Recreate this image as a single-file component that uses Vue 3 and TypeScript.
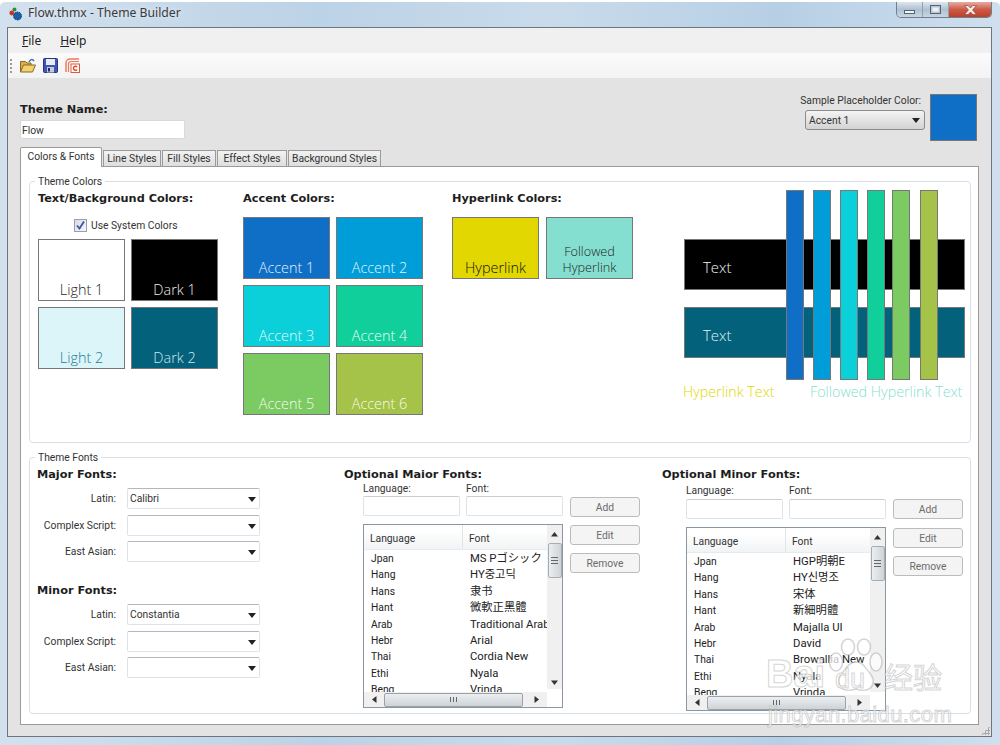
<script setup lang="ts">
interface Swatch { label: string; bg: string; fg: string }
const bases: Swatch[] = [
  { label: 'Light 1', bg: '#ffffff', fg: '#222222' },
  { label: 'Dark 1', bg: '#000000', fg: '#eeeeee' },
  { label: 'Light 2', bg: '#dbf5f9', fg: '#1f7a94' },
  { label: 'Dark 2', bg: '#04617b', fg: '#cfe8ee' },
]
const accents: Swatch[] = [
  { label: 'Accent 1', bg: '#0f6fc6', fg: '#e4f1fb' },
  { label: 'Accent 2', bg: '#009dd9', fg: '#e2f5fc' },
  { label: 'Accent 3', bg: '#0bd0d9', fg: '#e6fbfc' },
  { label: 'Accent 4', bg: '#10cf9b', fg: '#ecfcf7' },
  { label: 'Accent 5', bg: '#7cca62', fg: '#f2fbee' },
  { label: 'Accent 6', bg: '#a5c249', fg: '#f8fbe8' },
]
const bars = [
  { left: 102, bg: '#0f6fc6' },
  { left: 129, bg: '#009dd9' },
  { left: 156, bg: '#0bd0d9' },
  { left: 183, bg: '#10cf9b' },
  { left: 208, bg: '#7cca62' },
  { left: 236, bg: '#a5c249' },
]
const tabs = [
  { label: 'Line Styles', width: 58 },
  { label: 'Fill Styles', width: 54 },
  { label: 'Effect Styles', width: 70 },
  { label: 'Background Styles', width: 93 },
]
const codes = ['Jpan', 'Hang', 'Hans', 'Hant', 'Arab', 'Hebr', 'Thai', 'Ethi', 'Beng']
const majorList = ['MS Pゴシック', 'HY중고딕', '隶书', '微軟正黑體', 'Traditional Arabic', 'Arial', 'Cordia New', 'Nyala', 'Vrinda']
const minorList = ['HGP明朝E', 'HY신명조', '宋体', '新細明體', 'Majalla UI', 'David', 'Browallia New', 'Nyala', 'Vrinda']
const optional = [
  { title: 'Optional Maior Fonts:', list: majorList, cls: 'opt-major' },
  { title: 'Optional Minor Fonts:', list: minorList, cls: 'opt-minor' },
]
const majorRows = [
  { label: 'Latin:', value: 'Calibri' },
  { label: 'Complex Script:', value: '' },
  { label: 'East Asian:', value: '' },
]
const minorRows = [
  { label: 'Latin:', value: 'Constantia' },
  { label: 'Complex Script:', value: '' },
  { label: 'East Asian:', value: '' },
]
</script>

<template>
  <div class="window">
    <header class="titlebar">
      <svg class="app-icon" width="14" height="14" viewBox="0 0 14 14">
        <circle cx="8.500" cy="9" r="4" fill="#1c5fa8" stroke="#173f78" stroke-dasharray="1.500 1" />
        <circle cx="5.500" cy="2.500" r="2" fill="#2f8a3e" />
        <circle cx="2.800" cy="6" r="2.400" fill="#c8342c" />
      </svg>
      <span class="title-text">Flow.thmx - Theme Builder</span>
      <div class="controls">
        <div class="ctl"><span class="min-glyph"></span></div>
        <div class="ctl"><span class="max-glyph"></span></div>
        <div class="ctl close">
          <svg width="15" height="10" viewBox="0 0 15 10"><path d="M1.500 .5h3.600L7.500 3 9.900 .5h3.600L9.500 5l4 4.500H9.900L7.500 7 5.100 9.500H1.500l4-4.500z" fill="#f6ecea" stroke="#8a3a2e" stroke-width=".6" /></svg>
        </div>
      </div>
    </header>

    <div class="client">
      <nav class="menubar">
        <span class="menu"><u>F</u>ile</span>
        <span class="menu"><u>H</u>elp</span>
      </nav>
      <div class="toolbar">
        <span class="gripper"></span>
        <svg class="tool" width="17" height="15" viewBox="0 0 17 15">
          <path d="M1.500 14V3.500h5l1.500 1.500h4v2" fill="#dcae52" stroke="#8a6a20" />
          <path d="M1.500 14l3-7h12l-3 7z" fill="#f4d070" stroke="#8a6a20" />
          <path d="M10 4c1.500-3 3.500-3 5-1" fill="none" stroke="#3a6fb0" stroke-width="1.500" />
        </svg>
        <svg class="tool" width="15" height="15" viewBox="0 0 15 15">
          <rect x=".5" y=".5" width="14" height="14" rx="1" fill="#3f55b8" stroke="#28357a" />
          <rect x="3" y="1" width="9" height="6" fill="#e6ebf6" />
          <rect x="4" y="9" width="7" height="5.500" fill="#c5cad6" />
          <rect x="5" y="10" width="2" height="3.500" fill="#1f2a5e" />
        </svg>
        <svg class="tool" width="15" height="15" viewBox="0 0 15 15">
          <path d="M14 1H5a4 4 0 0 0-4 4v9" fill="none" stroke="#ee7a5e" stroke-width="1.500" />
          <path d="M14 3.500H6A2.500 2.500 0 0 0 3.500 6v8" fill="none" stroke="#ee7a5e" stroke-width="1.200" />
          <rect x="6" y="6" width="8.500" height="8.500" fill="#fff" stroke="#e0583a" />
          <path d="M12 9a2 2 0 1 0 0 2.600" fill="none" stroke="#d8401f" stroke-width="1.400" />
        </svg>
      </div>

      <main class="content">
        <div class="head-row">
          <div class="name-block">
            <label class="heading">Theme Name:</label>
            <div class="name-input">Flow</div>
          </div>
          <div class="sample">
            <div class="sample-controls">
              <span class="small">Sample Placeholder Color:</span>
              <div class="sample-select">Accent 1<i class="arrow"></i></div>
            </div>
            <div class="sample-swatch"></div>
          </div>
        </div>

        <div class="tabs">
          <div class="tab active">Colors &amp; Fonts</div>
          <div v-for="t in tabs" :key="t.label" class="tab" :style="{ width: t.width + 'px' }">{{ t.label }}</div>
        </div>

        <section class="panel">
          <div class="group colors">
            <span class="legend">Theme Colors</span>
            <div class="col col-base">
              <h3 class="heading">Text/Background Colors:</h3>
              <div class="check-row">
                <span class="check">
                  <svg width="11" height="11" viewBox="0 0 11 11"><path d="M2 5.500l2.500 3L9 1.500" fill="none" stroke="#3c55a8" stroke-width="1.800" /></svg>
                </span>
                <span class="small">Use System Colors</span>
              </div>
              <div class="swatches">
                <div v-for="s in bases" :key="s.label" class="swatch" :style="{ background: s.bg, color: s.fg }">{{ s.label }}</div>
              </div>
            </div>
            <div class="col col-accent">
              <h3 class="heading">Accent Colors:</h3>
              <div class="swatches">
                <div v-for="s in accents" :key="s.label" class="swatch" :style="{ background: s.bg, color: s.fg }">{{ s.label }}</div>
              </div>
            </div>
            <div class="col col-link">
              <h3 class="heading">Hyperlink Colors:</h3>
              <div class="swatches">
                <div class="swatch link-a">Hyperlink</div>
                <div class="swatch link-b">Followed<br />Hyperlink</div>
              </div>
            </div>
            <div class="preview">
              <div class="band band-dark">Text</div>
              <div class="band band-blue">Text</div>
              <div class="link-row">
                <span class="plink">Hyperlink Text</span>
                <span class="pfollow">Followed Hyperlink Text</span>
              </div>
              <div v-for="b in bars" :key="b.left" class="bar" :style="{ left: b.left + 'px', background: b.bg }"></div>
            </div>
          </div>

          <div class="group fonts">
            <span class="legend">Theme Fonts</span>
            <div class="font-col">
              <h3 class="heading">Major Fonts:</h3>
              <div class="font-rows">
                <div v-for="r in majorRows" :key="r.label" class="font-row">
                  <span class="small row-label">{{ r.label }}</span>
                  <div class="select">{{ r.value }}<i class="arrow"></i></div>
                </div>
              </div>
              <h3 class="heading minor-head">Minor Fonts:</h3>
              <div class="font-rows">
                <div v-for="r in minorRows" :key="r.label" class="font-row">
                  <span class="small row-label">{{ r.label }}</span>
                  <div class="select">{{ r.value }}<i class="arrow"></i></div>
                </div>
              </div>
            </div>

            <div v-for="o in optional" :key="o.title" class="opt" :class="o.cls">
              <h3 class="heading">{{ o.title }}</h3>
              <div class="opt-grid">
                <span class="small">Language:</span>
                <span class="small">Font:</span>
                <span></span>
                <div class="text-input"></div>
                <div class="text-input"></div>
                <div class="btn add">Add</div>
                <div class="list">
                  <div class="list-main">
                    <div class="list-head">
                      <span class="lh-a">Language</span>
                      <span class="lh-b">Font</span>
                    </div>
                    <div class="list-body">
                      <div v-for="(c, i) in codes" :key="c" class="list-row">
                        <span class="lr-a">{{ c }}</span>
                        <span class="lr-b">{{ o.list[i] }}</span>
                      </div>
                    </div>
                    <div class="hscroll">
                      <svg width="5" height="7" viewBox="0 0 5 7"><path d="M4.500 0v7L0 3.500z" fill="#333" /></svg>
                      <div class="hthumb">
                        <svg width="7" height="5" viewBox="0 0 7 5"><path d="M.5 0v5M3.500 0v5M6.500 0v5" stroke="#666" /></svg>
                      </div>
                      <svg width="5" height="7" viewBox="0 0 5 7"><path d="M.5 0v7L5 3.500z" fill="#333" /></svg>
                    </div>
                  </div>
                  <div class="vscroll">
                    <svg width="7" height="5" viewBox="0 0 7 5"><path d="M0 4.500h7L3.500 0z" fill="#333" /></svg>
                    <div class="vthumb">
                      <svg width="7" height="7" viewBox="0 0 7 7"><path d="M0 .5h7M0 3.500h7M0 6.500h7" stroke="#666" /></svg>
                    </div>
                    <svg class="down" width="7" height="5" viewBox="0 0 7 5"><path d="M0 .5h7L3.500 5z" fill="#333" /></svg>
                    <span class="corner"></span>
                  </div>
                </div>
                <div class="side-btns">
                  <div class="btn">Edit</div>
                  <div class="btn">Remove</div>
                </div>
              </div>
            </div>
          </div>
        </section>
        <span class="grip"></span>
      </main>
    </div>

    <div class="watermark">
      <svg class="paw" width="56" height="60" viewBox="0 0 56 60">
        <g fill="rgba(255,255,255,.72)" stroke="rgba(170,170,170,.5)" stroke-width="1.500">
          <ellipse cx="8" cy="24" rx="6.500" ry="9" />
          <ellipse cx="20" cy="9" rx="6.500" ry="8" />
          <ellipse cx="36" cy="9" rx="6.500" ry="8" />
          <ellipse cx="48" cy="24" rx="6" ry="9" />
          <path d="M28 24c6 0 9 5 13 10 4 5 6 9 3 14-3 5-10 5-16 3-6 2-13 2-16-3-3-5-1-9 3-14 4-5 7-10 13-10z" />
        </g>
      </svg>
      <span class="wm-bai">Bai</span>
      <span class="wm-du">du</span>
      <span class="wm-cn">经验</span>
      <span class="wm-url">jingyan.baidu.com</span>
    </div>
  </div>
</template>

<style scoped>
* { box-sizing: border-box; }
.window {
  position: relative;
  width: 1000px;
  height: 745px;
  display: flex;
  flex-direction: column;
  overflow: hidden;
  font-family: Roboto, "Noto Sans CJK JP", "Noto Sans CJK KR", sans-serif;
  font-size: 10.300px;
  color: #333;
  border-top: 2px solid #fff;
  border-radius: 6px 6px 0 0;
  background: linear-gradient(90deg, #d3e1ee 0%, #bcd2e6 32%, #c9dbeb 55%, #b7cfe5 78%, #cfdfee 100%);
}
.titlebar {
  height: 25px;
  flex: none;
  display: flex;
  align-items: flex-start;
  padding: 0 8px 0 9px;
}
.app-icon { margin-top: 5px; }
.title-text {
  margin: 3px 0 0 5px;
  font-family: "Noto Sans", sans-serif;
  font-size: 12.200px;
  line-height: 16px;
  color: #3b3b3b;
  text-shadow: 0 0 6px #eef4fa;
}
.controls {
  margin-left: auto;
  display: flex;
  height: 16px;
  border: 1px solid #6f7f8e;
  border-top: 0;
  border-radius: 0 0 5px 5px;
  overflow: hidden;
}
.ctl {
  width: 26px;
  display: flex;
  align-items: center;
  justify-content: center;
  background: linear-gradient(#dde6ee, #aec1d2 50%, #c8d6e2);
  border-right: 1px solid #8fa0af;
}
.ctl.close {
  width: 42px;
  border-right: 0;
  background: linear-gradient(#e6aca2, #cc5a46 50%, #bd3f2a);
}
.min-glyph { width: 11px; height: 4px; margin-top: 5px; background: #f2f5f8; border: 1px solid #56646f; }
.max-glyph { width: 11px; height: 9px; background: #eef2f6; border: 1px solid #56646f; box-shadow: inset 0 0 0 1.500px #b9c7d4; }
.client {
  flex: 1;
  margin: 0 8px 8px 7px;
  border: 1px solid #6c7680;
  display: flex;
  flex-direction: column;
  min-height: 0;
}
.menubar {
  height: 25px;
  flex: none;
  background: #f0f0f0;
  display: flex;
  align-items: center;
  gap: 19px;
  padding-left: 14px;
  font-family: "Noto Sans", sans-serif;
  font-size: 12px;
}
.menu { color: #222; }
.toolbar {
  height: 25px;
  flex: none;
  background: linear-gradient(#fbfbfb, #f3f3f3);
  display: flex;
  align-items: center;
  padding-left: 2px;
}
.gripper {
  width: 2px;
  height: 14px;
  margin-right: 7px;
  background: repeating-linear-gradient(#9a9a9a 0 2px, transparent 2px 4px);
}
.tool { margin-right: 7px; }
.content {
  position: relative;
  flex: 1;
  min-height: 0;
  background: #e3e3e3;
  padding: 0 12px 11px 12px;
  display: flex;
  flex-direction: column;
}
.head-row {
  display: flex;
  justify-content: space-between;
  height: 69px;
  flex: none;
}
.heading {
  display: block;
  margin: 0;
  font-family: "DejaVu Sans", sans-serif;
  font-weight: 700;
  font-size: 11.300px;
  line-height: 14px;
  color: #1d1d1d;
}
.name-block { padding-top: 25px; }
.name-input {
  width: 165px;
  height: 19px;
  margin-top: 3px;
  background: #fff;
  border: 1px solid #d6dadd;
  border-radius: 2px;
  padding-left: 1px;
  line-height: 19px;
}
.small { font-size: 10.300px; line-height: 13px; color: #333; }
.sample {
  display: flex;
  gap: 5px;
  padding: 16px 2px 0 0;
}
.sample-controls { display: flex; flex-direction: column; align-items: flex-end; }
.sample-select {
  position: relative;
  width: 120px;
  height: 20px;
  margin-top: 3px;
  margin-right: -4px;
  padding-left: 3px;
  line-height: 20px;
  border: 1px solid #8b8b8b;
  border-radius: 3px;
  background: linear-gradient(#f4f4f4, #d3d3d3);
}
.sample-swatch {
  width: 47px;
  height: 47px;
  margin-left: 4px;
  background: #0f6fc6;
  border: 1px solid #777;
}
.arrow {
  position: absolute;
  right: 4px;
  top: 7px;
  border-left: 4px solid transparent;
  border-right: 4px solid transparent;
  border-top: 5px solid #222;
}
.tabs {
  display: flex;
  align-items: flex-end;
  height: 20px;
  flex: none;
  margin-bottom: -1px;
  position: relative;
  z-index: 1;
}
.tab {
  height: 17px;
  margin-left: 1px;
  padding: 0;
  text-align: center;
  line-height: 16px;
  background: linear-gradient(#f2f2f2, #dedede);
  border: 1px solid #9a9a9a;
  white-space: nowrap;
}
.tab.active {
  height: 20px;
  width: 82px;
  margin-left: 0;
  line-height: 17px;
  background: #fff;
  border-bottom: 0;
  border-radius: 2px 2px 0 0;
}
.panel {
  flex: 1;
  min-height: 0;
  background: #fff;
  border: 1px solid #9a9a9a;
  padding: 14px 7px 10px 8px;
  display: flex;
  flex-direction: column;
  gap: 14px;
}
.group {
  position: relative;
  border: 1px solid #d7e0e8;
  border-radius: 4px;
  display: flex;
}
.legend {
  position: absolute;
  left: 5px;
  top: -7px;
  padding: 0 3px;
  background: #fff;
  line-height: 13px;
}
.colors { height: 262px; padding: 10px 0 0 8px; }
.col-base { width: 205px; }
.col-accent { width: 209px; }
.col-link { width: 232px; }
.check-row {
  display: flex;
  align-items: center;
  gap: 4px;
  margin: 12px 0 0 36px;
  height: 14px;
}
.check {
  width: 13px;
  height: 13px;
  display: flex;
  align-items: center;
  justify-content: center;
  border: 1px solid #9aa0a8;
  background: linear-gradient(135deg, #d5dbe4, #f6f7f9);
}
.swatches {
  display: grid;
  grid-template-columns: 87px 87px;
  grid-auto-rows: 62px;
  gap: 6px;
  margin-top: 11px;
}
.col-base .swatches { margin-top: 7px; }
.col-link .swatches { column-gap: 7px; }
.swatch {
  border: 1px solid #777;
  display: flex;
  align-items: flex-end;
  justify-content: center;
  text-align: center;
  font-family: "Open Sans", sans-serif;
  font-size: 14.400px;
  font-weight: 300;
  line-height: 20px;
  padding-bottom: 0;
}
.link-a { background: #e2d700; color: #111; }
.link-b { background: #85dfd0; color: #222; font-size: 12.700px; line-height: 16px; padding-bottom: 3px; }
.preview {
  position: relative;
  width: 281px;
  margin-top: -2px;
  padding-top: 49px;
}
.band {
  height: 51px;
  border: 1px solid #777;
  margin-bottom: 17px;
  padding-left: 18px;
  font-family: "Open Sans", sans-serif;
  font-size: 15px;
  font-weight: 300;
  line-height: 55px;
}
.band-dark { background: #000; color: #f0f0f0; }
.band-blue { background: #04617b; color: #dff2f5; }
.link-row {
  display: flex;
  margin-top: 25px;
  font-family: "Open Sans", sans-serif;
  font-size: 14.300px;
  font-weight: 300;
  line-height: 18px;
  white-space: nowrap;
}
.plink { color: #e2d700; width: 127px; margin-left: -1px; }
.pfollow { color: #85dfd0; }
.bar {
  position: absolute;
  top: 0;
  width: 18px;
  height: 190px;
  border: 1px solid #777;
}
.fonts { flex: 1; padding: 10px 0 0 7px; }
.font-col { width: 307px; }
.font-rows { display: flex; flex-direction: column; gap: 5.500px; margin-top: 6px; }
.font-row { display: flex; align-items: center; }
.row-label { width: 79px; text-align: right; margin-right: 11px; }
.select {
  position: relative;
  width: 133px;
  height: 21px;
  padding-left: 2px;
  line-height: 20px;
  background: #fff;
  border: 1px solid #dde3e8;
  border-top-color: #b4b8bc;
  border-radius: 2px;
}
.select .arrow { top: 8px; right: 3px; }
.minor-head { margin: 22px 0 1px; }
.opt-major { width: 318px; }
.opt-grid {
  display: grid;
  grid-template-columns: 97px 97px 71px;
  column-gap: 6px;
}
.opt-major .opt-grid { margin-left: 19px; grid-template-rows: 14px 20px 184px; }
.opt-minor .opt-grid { margin: 2px 0 0 24px; grid-template-rows: 15px 20px 184px; }
.text-input {
  height: 20px;
  background: #fff;
  border: 1px solid #dde3e8;
  border-top-color: #c8ced2;
  border-radius: 2px;
}
.btn {
  height: 20px;
  display: flex;
  align-items: center;
  justify-content: center;
  color: #6c6c6c;
  background: #f4f4f4;
  border: 1px solid #bcbcbc;
  border-radius: 3px;
}
.btn.add { margin: 1px 0 0 1px; }
.opt-minor .btn.add { margin-top: 0; }
.list {
  grid-column: 1 / span 2;
  margin-top: 8px;
  width: 200px;
  height: 184px;
  border: 1px solid #8a97a0;
  display: flex;
  background: #fff;
}
.list-main { flex: 1; min-width: 0; display: flex; flex-direction: column; }
.list-head {
  height: 25px;
  flex: none;
  display: flex;
  align-items: center;
  background: linear-gradient(#fff 25%, #f1f3f5);
  border-bottom: 1px solid #e8ebee;
}
.lh-a { width: 99px; padding-left: 6px; height: 100%; line-height: 28px; border-right: 1px solid #e2e5e8; }
.lh-b { padding-left: 6px; line-height: 28px; height: 100%; }
.list-body { flex: 1; min-height: 0; overflow: hidden; padding-top: 1px; }
.list-row { display: flex; height: 16.400px; line-height: 16px; white-space: nowrap; color: #222; }
.lr-a { width: 99px; flex: none; padding-left: 7px; }
.lr-b { padding-left: 7px; flex: 1; min-width: 0; overflow: hidden; font-size: 11.300px; }
.hscroll {
  height: 15px;
  flex: none;
  display: flex;
  align-items: center;
  gap: 7px;
  padding: 0 8px;
  background: #f0f0f0;
}
.hthumb {
  flex: 1;
  height: 14px;
  display: flex;
  align-items: center;
  justify-content: center;
  margin-right: 4px;
  border: 1px solid #9aa3aa;
  border-radius: 2px;
  background: linear-gradient(#eceff1, #cfd3d6);
}
.vscroll {
  position: relative;
  width: 15px;
  flex: none;
  display: flex;
  flex-direction: column;
  align-items: center;
  background: #f0f0f0;
  padding-top: 7px;
}
.vthumb {
  width: 14px;
  height: 35px;
  margin-top: 6px;
  display: flex;
  align-items: center;
  justify-content: center;
  border: 1px solid #a5adb3;
  border-radius: 2px;
  background: linear-gradient(90deg, #eceff1, #cfd3d6);
}
.down { margin-top: 102px; }
.corner { flex: 1; width: 100%; margin-top: 4px; background: #fff; }
.side-btns {
  display: flex;
  flex-direction: column;
  gap: 8px;
  margin: 9px 0 0 1px;
}
.grip {
  position: absolute;
  right: 1px;
  bottom: 1px;
  width: 9px;
  height: 9px;
  background: radial-gradient(circle, #a8a8a8 1px, transparent 1.200px) 0 0 / 3px 3px;
  clip-path: polygon(100% 0, 100% 100%, 0 100%);
}
.watermark {
  position: absolute;
  left: 766px;
  top: 634px;
  width: 190px;
  height: 92px;
  pointer-events: none;
  font-family: "Liberation Sans", "Noto Sans CJK SC", sans-serif;
  color: rgba(255, 255, 255, .75);
  -webkit-text-stroke: 1px rgba(170, 170, 170, .5);
}
.paw { position: absolute; left: 62px; top: 2px; }
.wm-bai { position: absolute; left: 0; top: 16px; font-size: 38px; line-height: 44px; font-weight: 700; }
.wm-du { position: absolute; left: 69px; top: 25px; font-size: 27px; line-height: 36px; font-weight: 400; }
.wm-cn { position: absolute; left: 118px; top: 26px; font-size: 29px; line-height: 34px; }
.wm-url { position: absolute; left: 2px; top: 67px; font-size: 22px; line-height: 24px; letter-spacing: .4px; }
</style>

<style>
html, body { margin: 0; background: #fff; }
</style>
